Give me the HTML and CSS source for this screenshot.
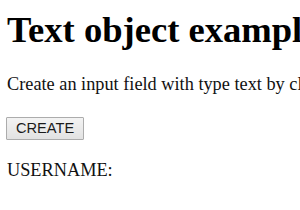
FILE: index.html
```html
<!DOCTYPE html>
<html>
<head>
<meta charset="utf-8">
<link rel="stylesheet" href="styles.css">
</head>
<body>
<div class="page">
  <h1 class="title">Text object example</h1>
  <p class="intro">Create an input field with type text by clicking the "Create" button.</p>
  <button class="btn" type="button">CREATE</button>
  <p class="label">USERNAME:</p>
</div>
</body>
</html>
```
FILE: styles.css
```css
html, body {
  margin: 0;
  padding: 0;
  overflow: hidden;
  background: #fff;
}
.page {
  width: 900px;
  padding: 9px 7px 0;
  font-family: "Liberation Serif", "Times New Roman", serif;
  font-size: 18.3px;
  line-height: 21px;
  color: #111;
}
.title {
  font-size: 36.6px;
  line-height: 42px;
  font-weight: bold;
  margin: 0 0 23px;
  white-space: nowrap;
  color: #000;
}
.intro {
  margin: 0 0 22px;
  white-space: nowrap;
}
.btn {
  display: block;
  margin-left: -1px;
  font-family: "Liberation Sans", Arial, sans-serif;
  font-size: 14.6px;
  line-height: 17px;
  padding: 2px 9px;
  border: 1px solid #acacac;
  border-radius: 1px;
  background: linear-gradient(#f3f3f3, #e2e2e2);
  color: #1a1a1a;
}
.label {
  margin: 20px 0 0;
}
```
